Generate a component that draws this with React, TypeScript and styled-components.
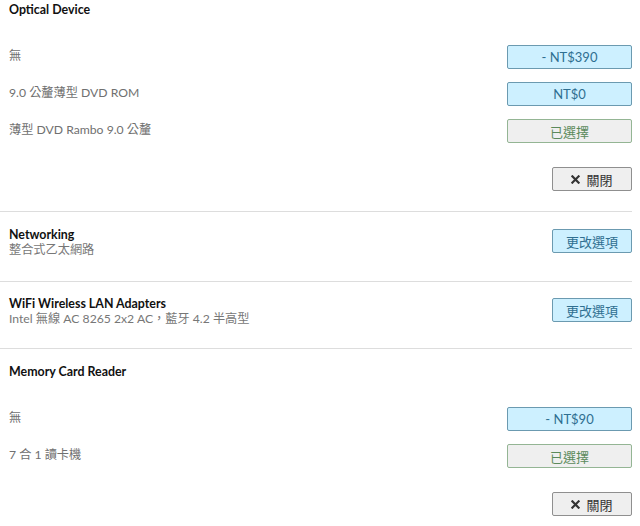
import React from "react";
import styled, { createGlobalStyle } from "styled-components";

const Global = createGlobalStyle`
  html, body { margin: 0; padding: 0; background: #fff; }
  body { font-family: Lato, "Noto Sans CJK TC", sans-serif; font-size: 12px; color: #333; }
`;

const Page = styled.div`
  width: 632px;
`;

const Section = styled.section<{ $first?: boolean }>`
  padding: ${(p) => (p.$first ? "0" : "13px")} 0 20px 9px;
  border-top: ${(p) => (p.$first ? "none" : "1px solid #ddd")};
`;

const Title = styled.h3`
  margin: 0;
  font-size: 12.4px;
  line-height: 20px;
  font-weight: 700;
  color: #111;
`;

const Options = styled.div`
  margin-top: 25px;
  display: flex;
  flex-direction: column;
  gap: 13px;
`;

const Row = styled.div`
  display: flex;
  align-items: center;
  justify-content: space-between;
  height: 24px;
`;

const Label = styled.span`
  color: #707070;
  font-size: 12.2px;
  line-height: 20px;
  margin-top: -2px;
`;

type Kind = "price" | "selected" | "close" | "change";

const Btn = styled.button<{ $kind: Kind; $w: number }>`
  width: ${(p) => p.$w}px;
  height: 24px;
  box-sizing: border-box;
  border-radius: 2px;
  font-family: Lato, "Noto Sans CJK TC", sans-serif;
  font-size: 13px;
  padding: 0;
  flex-shrink: 0;
  display: inline-flex;
  align-items: center;
  justify-content: center;
  gap: 6px;
  cursor: pointer;
  background: ${(p) => (p.$kind === "price" || p.$kind === "change" ? "#cdf0ff" : "#efefef")};
  border: 1px solid
    ${(p) =>
      p.$kind === "price" || p.$kind === "change"
        ? "#6b9ab0"
        : p.$kind === "selected"
        ? "#94b594"
        : "#8f8f8f"};
  color: ${(p) =>
    p.$kind === "price" || p.$kind === "change"
      ? "#2f6f91"
      : p.$kind === "selected"
      ? "#5b8a5b"
      : "#333"};
`;

const ChangeBtn = styled(Btn)`
  margin-top: 1px;
`;

const CloseRow = styled.div`
  display: flex;
  justify-content: flex-end;
  margin-top: 24px;
`;

const Summary = styled.section<{ $pt: number; $pb: number }>`
  border-top: 1px solid #ddd;
  padding: ${(p) => p.$pt}px 0 ${(p) => p.$pb}px 9px;
  display: flex;
  align-items: flex-start;
  justify-content: space-between;
`;

const SummaryText = styled.div`
  display: flex;
  flex-direction: column;
`;

const SummaryTitle = styled.div`
  font-weight: 700;
  color: #111;
  font-size: 12.4px;
  line-height: 14px;
`;

const SummarySub = styled.div`
  color: #777;
  font-size: 12.2px;
  line-height: 15px;
`;

const XIcon = () => (
  <svg width="9" height="9" viewBox="0 0 10 10">
    <path d="M1.5 1.5 L8.5 8.5 M8.5 1.5 L1.5 8.5" stroke="#333" strokeWidth="2.4" strokeLinecap="square" />
  </svg>
);

type Opt = { label: string; btn: string; kind: "price" | "selected" };

const OptionSection = ({ title, opts, first }: { title: string; opts: Opt[]; first?: boolean }) => (
  <Section $first={first}>
    <Title>{title}</Title>
    <Options>
      {opts.map((o) => (
        <Row key={o.label}>
          <Label>{o.label}</Label>
          <Btn $kind={o.kind} $w={125}>{o.btn}</Btn>
        </Row>
      ))}
    </Options>
    <CloseRow>
      <Btn $kind="close" $w={80}>
        <XIcon />
        關閉
      </Btn>
    </CloseRow>
  </Section>
);

export default function App() {
  return (
    <Page>
      <Global />
      <OptionSection
        first
        title="Optical Device"
        opts={[
          { label: "無", btn: "- NT$390", kind: "price" },
          { label: "9.0 公釐薄型 DVD ROM", btn: "NT$0", kind: "price" },
          { label: "薄型 DVD Rambo 9.0 公釐", btn: "已選擇", kind: "selected" },
        ]}
      />
      <Summary $pt={16} $pb={24}>
        <SummaryText>
          <SummaryTitle>Networking</SummaryTitle>
          <SummarySub>整合式乙太網路</SummarySub>
        </SummaryText>
        <ChangeBtn $kind="change" $w={80}>更改選項</ChangeBtn>
      </Summary>
      <Summary $pt={15} $pb={22}>
        <SummaryText>
          <SummaryTitle>WiFi Wireless LAN Adapters</SummaryTitle>
          <SummarySub>Intel 無線 AC 8265 2x2 AC，藍牙 4.2 半高型</SummarySub>
        </SummaryText>
        <ChangeBtn $kind="change" $w={80}>更改選項</ChangeBtn>
      </Summary>
      <OptionSection
        title="Memory Card Reader"
        opts={[
          { label: "無", btn: "- NT$90", kind: "price" },
          { label: "7 合 1 讀卡機", btn: "已選擇", kind: "selected" },
        ]}
      />
    </Page>
  );
}
